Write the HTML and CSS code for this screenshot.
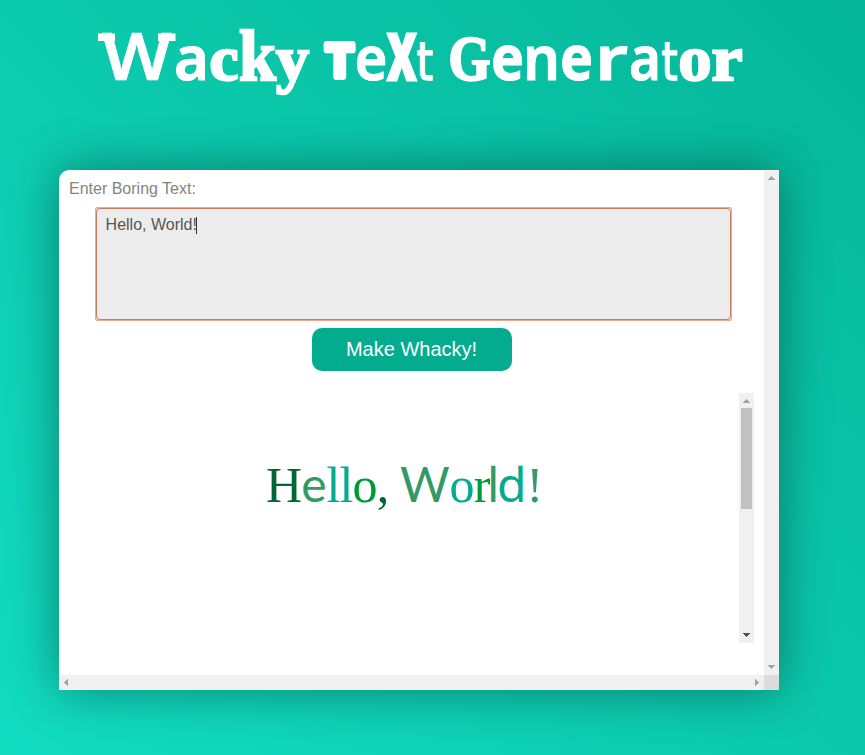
FILE: index.html
```html
<!DOCTYPE html>
<html lang="en">
<head>
<meta charset="utf-8">
<title>Wacky Text Generator</title>
<link rel="stylesheet" href="styles.css">
</head>
<body>
<h1 class="title"><svg width="865" height="110"><path class="serifs" d="M98 33.5h17v7.5h-17zM158 33.5h17.500v7.500h-17.500z"/><text y="80" class="letters"><tspan class="slab" x="102" textLength="69.500" lengthAdjust="spacingAndGlyphs">W</tspan><tspan class="sans" x="174" textLength="35" lengthAdjust="spacingAndGlyphs">a</tspan><tspan class="fat" x="209.500" textLength="29" lengthAdjust="spacingAndGlyphs">c</tspan><tspan class="fat tall" x="239" textLength="37" lengthAdjust="spacingAndGlyphs">k</tspan><tspan class="fat" x="276" textLength="33" lengthAdjust="spacingAndGlyphs">y</tspan> <tspan class="round" x="326" y="77" textLength="27" lengthAdjust="spacingAndGlyphs">T</tspan><tspan class="sans" x="354.500" y="80" textLength="33" lengthAdjust="spacingAndGlyphs">e</tspan><tspan class="block" x="387.500" textLength="28.500" lengthAdjust="spacingAndGlyphs">X</tspan><tspan class="thin" x="416.500" textLength="16.500" lengthAdjust="spacingAndGlyphs">t</tspan> <tspan class="fat cap" x="448.500" textLength="42" lengthAdjust="spacingAndGlyphs">G</tspan><tspan class="heavy" x="491" textLength="33" lengthAdjust="spacingAndGlyphs">e</tspan><tspan class="sans" x="523" textLength="37" lengthAdjust="spacingAndGlyphs">n</tspan><tspan class="heavy" x="560" textLength="33" lengthAdjust="spacingAndGlyphs">e</tspan><tspan class="sans" x="595" textLength="33" lengthAdjust="spacingAndGlyphs">r</tspan><tspan class="sans" x="629" textLength="32" lengthAdjust="spacingAndGlyphs">a</tspan><tspan class="thin" x="661.500" textLength="16" lengthAdjust="spacingAndGlyphs">t</tspan><tspan class="fat" x="678.500" textLength="33" lengthAdjust="spacingAndGlyphs">o</tspan><tspan class="fat" x="711.500" textLength="31" lengthAdjust="spacingAndGlyphs">r</tspan></text></svg></h1>
<main class="card">
  <div class="content">
    <label class="label">Enter Boring Text:</label>
    <div class="field"><div class="input">Hello, World!<span class="caret"></span></div></div>
    <button class="button">Make Whacky!</button>
    <section class="output">
      <p class="result"><span class="serif forest">H</span><span class="lato moss">e</span><span class="serif teal">ll</span><span class="serif green">o</span><span class="serif forest">, </span><span class="lato moss">W</span><span class="serif teal">o</span><span class="serif green">r</span><span class="open tight moss">l</span><span class="open teal">d</span><span class="serif moss">!</span></p>
      <div class="bar">
        <svg width="15" height="15"><path class="arrow" d="M4 10h7v-1h-1v-1h-1v-1h-1v-1h-1v1h-1v1h-1v1h-1z"/></svg>
        <div class="thumb"></div>
        <svg class="end" width="15" height="15"><path class="arrow dark" d="M4 5h7v1h-1v1h-1v1h-1v1h-1v-1h-1v-1h-1v-1h-1z"/></svg>
      </div>
    </section>
  </div>
  <div class="bar">
    <svg width="15" height="15"><path class="arrow" d="M4 10h7v-1h-1v-1h-1v-1h-1v-1h-1v1h-1v1h-1v1h-1z"/></svg>
    <svg class="end" width="15" height="15"><path class="arrow" d="M4 5h7v1h-1v1h-1v1h-1v1h-1v-1h-1v-1h-1v-1h-1z"/></svg>
  </div>
  <div class="bar across">
    <svg width="15" height="15"><path class="arrow" d="M9 4v7h-1v-1h-1v-1h-1v-1h-1v-1h1v-1h1v-1h1v-1z"/></svg>
    <svg class="end" width="15" height="15"><path class="arrow" d="M6 4v7h1v-1h1v-1h1v-1h1v-1h-1v-1h-1v-1h-1v-1z"/></svg>
  </div>
  <div class="corner"></div>
</main>
</body>
</html>
```
FILE: styles.css
```css
* { box-sizing: border-box; }
html { height: 100%; }
body {
  margin: 0;
  height: 755px;
  overflow: hidden;
  background: linear-gradient(45deg, #12dcc1, #05b698);
  font-family: "Liberation Sans", sans-serif;
}
.title { margin: 0; height: 170px; font-weight: normal; }
.title svg { display: block; }
.letters, .serifs { fill: #fff; }
.slab { font: 600 65px "Noto Sans", sans-serif; stroke: #fff; stroke-width: .5px; }
.sans { font: 600 62px "Noto Sans", sans-serif; stroke: #fff; stroke-width: 1px; }
.heavy { font: bold 62px "Noto Sans", sans-serif; stroke: #fff; stroke-width: 1px; }
.fat { font: bold 64px "Liberation Serif", serif; stroke: #fff; stroke-width: 2.4px; }
.tall { font-size: 71px; }
.cap { font-size: 64px; }
.round { font: bold 45px "DejaVu Sans", sans-serif; stroke: #fff; stroke-width: 6px; stroke-linejoin: round; }
.block { font: 900 65px Roboto, sans-serif; stroke: #fff; stroke-width: 3px; }
.thin { font: 53px "DejaVu Sans", sans-serif; stroke: #fff; stroke-width: 1.4px; }
.card {
  width: 720px;
  height: 520px;
  margin-left: 59px;
  display: grid;
  grid-template: 505px 15px / 705px 15px;
  background: #fff;
  border-top-left-radius: 10px;
  box-shadow: 0 0 50px rgba(0, 0, 0, .4);
}
.content { display: flex; flex-direction: column; padding: 9px 10px 0; }
.label { font-size: 16px; line-height: 19px; color: #848484; }
.field {
  width: 637px;
  height: 114px;
  margin: 9px 0 0 26px;
  border: 1px solid #f1a98f;
  border-radius: 2px;
  background: #e8d5cd;
}
.input {
  height: 112px;
  padding: 7px 8px 7px 8.6px;
  border: 1px solid #c97b60;
  background: #ececec;
  border-radius: 4px;
  font-size: 16px;
  line-height: 18px;
  color: #555;
}
.caret { display: inline-block; width: 1px; height: 17px; margin: 0 0 0 -1px; background: #333; vertical-align: -4px; }
.button {
  width: 200px;
  height: 43px;
  margin: 7px 0 22px 243px;
  padding: 0 1px 0 0;
  border: 0;
  border-radius: 10px;
  background: #03ab8f;
  color: #fff;
  font: 20px "Liberation Sans", sans-serif;
}
.output { display: flex; height: 250px; width: 685px; }
.result {
  width: 670px;
  margin: 0;
  padding: 61px 0 0 197px;
  font-size: 48px;
  line-height: 60px;
  white-space: nowrap;
}
.serif { font-family: "Liberation Serif", serif; font-size: 50px; letter-spacing: -0.9px; }
.lato { font-family: Lato, sans-serif; }
.open { font-family: "Noto Sans", sans-serif; }
.tight { margin: 0 -2.4px; }
.forest { color: #063; }
.moss { color: #396; }
.teal { color: #03ab8f; }
.green { color: #093; }
.bar { display: flex; flex-direction: column; width: 15px; background: #f0f0f0; }
.bar svg { display: block; flex: none; }
.across { flex-direction: row; width: auto; }
.bar .end { margin-top: auto; }
.across .end { margin: 0 0 0 auto; }
.thumb { width: 11px; height: 101px; margin-left: 2px; background: #c1c1c1; }
.arrow { fill: #a3a3a3; }
.dark { fill: #505050; }
.corner { background: #dcdcdc; }
```
